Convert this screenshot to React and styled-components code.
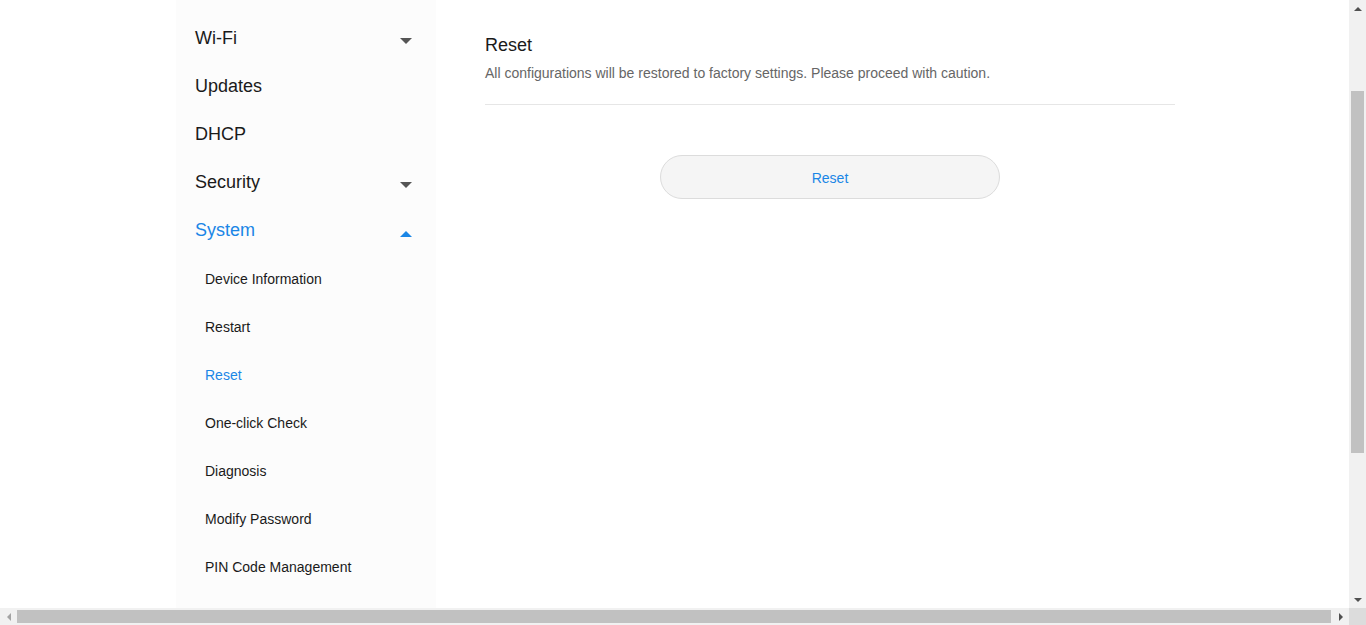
import React from "react";
import styled, { createGlobalStyle } from "styled-components";

const GlobalStyle = createGlobalStyle`
  html, body {
    margin: 0;
    padding: 0;
    background: #fff;
    overflow: hidden;
  }
  body {
    font-family: "Liberation Sans", Arial, sans-serif;
    color: #1a1a1a;
  }
`;

const BLUE = "#1a86e6";

const menu = [
  { label: "Wi-Fi", arrow: "down" },
  { label: "Updates" },
  { label: "DHCP" },
  { label: "Security", arrow: "down" },
  { label: "System", arrow: "up", active: true },
];

const subMenu = [
  "Device Information",
  "Restart",
  "Reset",
  "One-click Check",
  "Diagnosis",
  "Modify Password",
  "PIN Code Management",
];

const Frame = styled.div`
  display: flex;
  flex-direction: column;
  width: 1366px;
  height: 625px;
  overflow: hidden;
`;

const Body = styled.div`
  flex: 1;
  display: flex;
  min-height: 0;
`;

const Viewport = styled.div`
  flex: 1;
  display: flex;
  padding-left: 176px;
  overflow: hidden;
`;

const Sidebar = styled.nav`
  width: 260px;
  flex-shrink: 0;
  background: #fcfcfc;
  padding: 14px 24px 0 19px;
  box-sizing: border-box;
`;

const MenuRow = styled.div`
  height: 48px;
  display: flex;
  align-items: center;
  justify-content: space-between;
  font-size: 18px;
  color: ${(p) => (p.$active ? BLUE : "#1a1a1a")};
`;

const Arrow = styled.span`
  width: 0;
  height: 0;
  border-left: 6px solid transparent;
  border-right: 6px solid transparent;
  ${(p) =>
    p.$dir === "up"
      ? `border-bottom: 6px solid ${BLUE}; margin-top: 7px;`
      : `border-top: 6px solid #555; margin-top: 5px;`}
`;

const SubList = styled.div`
  padding-top: 1px;
`;

const SubRow = styled.div`
  height: 48px;
  display: flex;
  align-items: center;
  padding-left: 10px;
  font-size: 14px;
  color: ${(p) => (p.$active ? BLUE : "#1a1a1a")};
`;

const Main = styled.main`
  width: 690px;
  margin-left: 49px;
  padding-top: 34px;
`;

const Title = styled.h2`
  margin: 0;
  font-size: 18px;
  font-weight: normal;
  line-height: 22px;
  color: #1a1a1a;
`;

const Desc = styled.p`
  margin: 9px 0 0;
  font-size: 14px;
  line-height: 16px;
  color: #666;
`;

const Divider = styled.hr`
  margin: 23px 0 0;
  border: none;
  border-top: 1px solid #e6e6e6;
`;

const ButtonRow = styled.div`
  display: flex;
  justify-content: center;
  padding-top: 50px;
`;

const PillButton = styled.button`
  width: 340px;
  height: 44px;
  padding: 1px 0 0;
  border-radius: 22px;
  border: 1px solid #dcdcdc;
  background: #f5f5f5;
  color: ${BLUE};
  font-family: inherit;
  font-size: 14px;
  cursor: pointer;
`;

const VScroll = styled.div`
  width: 17px;
  flex-shrink: 0;
  background: #f1f1f1;
  display: flex;
  flex-direction: column;
  align-items: center;
`;

const HScroll = styled.div`
  height: 17px;
  display: flex;
  align-items: center;
  background: #f1f1f1;
`;

const ScrollBtn = styled.div`
  width: 17px;
  height: 17px;
  flex-shrink: 0;
  display: flex;
  align-items: center;
  justify-content: center;
`;

const Tri = styled.span`
  width: 0;
  height: 0;
  ${(p) =>
    p.$dir === "up"
      ? "border-left:4px solid transparent;border-right:4px solid transparent;border-bottom:4px solid #505050;"
      : p.$dir === "down"
      ? "border-left:4px solid transparent;border-right:4px solid transparent;border-top:4px solid #505050;"
      : p.$dir === "left"
      ? "border-top:4px solid transparent;border-bottom:4px solid transparent;border-right:4px solid #a3a3a3;"
      : "border-top:4px solid transparent;border-bottom:4px solid transparent;border-left:4px solid #505050;"}
`;

const VTrack = styled.div`
  flex: 1;
  width: 100%;
  display: flex;
  flex-direction: column;
  align-items: center;
  padding-top: 74px;
  box-sizing: border-box;
`;

const VThumb = styled.div`
  width: 13px;
  height: 362px;
  background: #c1c1c1;
`;

const HTrack = styled.div`
  flex: 1;
  height: 100%;
  display: flex;
  align-items: center;
`;

const HThumb = styled.div`
  width: 1314px;
  height: 13px;
  background: #c1c1c1;
`;

const Corner = styled.div`
  width: 17px;
  height: 17px;
  background: #dcdcdc;
`;

export default function App() {
  return (
    <>
      <GlobalStyle />
      <Frame>
        <Body>
          <Viewport>
            <Sidebar>
              {menu.map((m) => (
                <MenuRow key={m.label} $active={m.active}>
                  <span>{m.label}</span>
                  {m.arrow && <Arrow $dir={m.arrow} />}
                </MenuRow>
              ))}
              <SubList>
                {subMenu.map((s) => (
                  <SubRow key={s} $active={s === "Reset"}>
                    {s}
                  </SubRow>
                ))}
              </SubList>
            </Sidebar>
            <Main>
              <Title>Reset</Title>
              <Desc>
                All configurations will be restored to factory settings. Please
                proceed with caution.
              </Desc>
              <Divider />
              <ButtonRow>
                <PillButton>Reset</PillButton>
              </ButtonRow>
            </Main>
          </Viewport>
          <VScroll>
            <ScrollBtn>
              <Tri $dir="up" />
            </ScrollBtn>
            <VTrack>
              <VThumb />
            </VTrack>
            <ScrollBtn>
              <Tri $dir="down" />
            </ScrollBtn>
          </VScroll>
        </Body>
        <HScroll>
          <ScrollBtn>
            <Tri $dir="left" />
          </ScrollBtn>
          <HTrack>
            <HThumb />
          </HTrack>
          <ScrollBtn>
            <Tri $dir="right" />
          </ScrollBtn>
          <Corner />
        </HScroll>
      </Frame>
    </>
  );
}
